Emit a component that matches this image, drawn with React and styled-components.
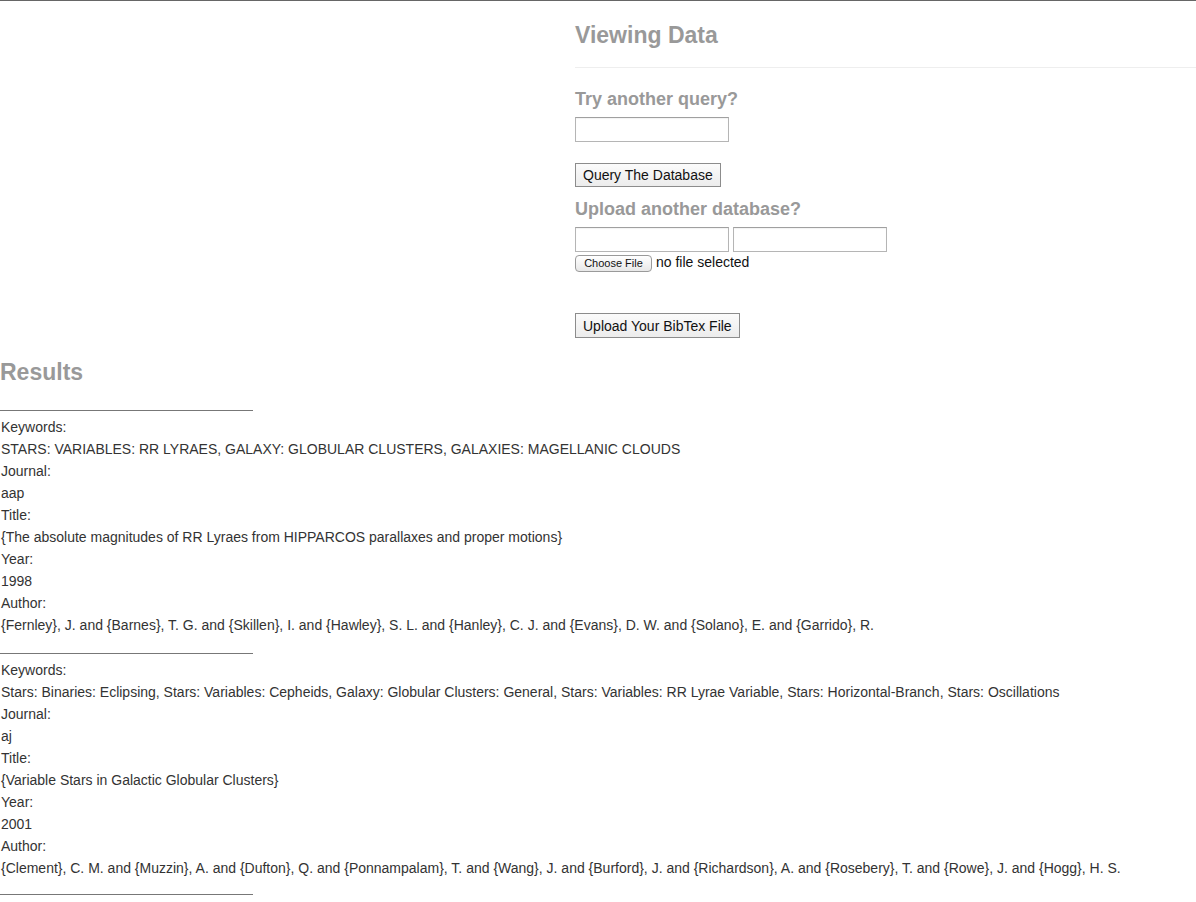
import React from "react";
import styled, { createGlobalStyle } from "styled-components";

const Global = createGlobalStyle`
  html, body { margin: 0; padding: 0; background: #fff; }
  body {
    border-top: 1px solid #666;
    font-family: "Liberation Sans", Arial, Helvetica, sans-serif;
    font-size: 14px;
    line-height: 22px;
    color: #333;
  }
`;

const Page = styled.div`
  display: flex;
  flex-direction: column;
`;

const Top = styled.div`
  display: grid;
  grid-template-columns: 575px 1fr;
`;

const Panel = styled.div`
  display: flex;
  flex-direction: column;
  align-items: flex-start;
`;

const Title = styled.h2`
  margin: ${(p) => p.$mt || 0}px 0 0;
  font-size: 23px;
  line-height: 23px;
  font-weight: bold;
  color: #999;
`;

const Rule = styled.div`
  align-self: stretch;
  height: 1px;
  background: #eee;
  margin-top: 20px;
`;

const SubTitle = styled.h3`
  margin: ${(p) => p.$mt}px 0 0;
  font-size: 18px;
  line-height: 18px;
  font-weight: bold;
  color: #999;
`;

const TextInput = styled.input`
  box-sizing: border-box;
  width: 154px;
  height: 25px;
  margin: 0;
  padding: 2px 4px;
  border: 1px solid #b5b5b5;
  border-top-color: #a0a0a0;
  box-shadow: inset 0 1px 1px rgba(0, 0, 0, 0.05);
  font-family: inherit;
  font-size: 14px;
  background: #fff;
`;

const InputRow = styled.div`
  display: flex;
  gap: 4px;
  margin-top: ${(p) => p.$mt}px;
`;

const Button = styled.button`
  box-sizing: border-box;
  height: ${(p) => p.$h || 24}px;
  margin: ${(p) => p.$mt}px 0 0;
  padding: 0 7px;
  border: 1px solid #8c8c8c;
  border-radius: 0;
  background: linear-gradient(#fbfbfb, #ececec);
  font-family: "Liberation Sans", Arial, sans-serif;
  font-size: 14px;
  color: #111;
  cursor: pointer;
`;

const FileRow = styled.div`
  display: flex;
  align-items: flex-start;
  gap: 4px;
  margin-top: 3px;
  height: 18px;
  line-height: 14px;
`;

const FileButton = styled.button`
  box-sizing: border-box;
  width: 77px;
  height: 17px;
  margin: 0;
  padding: 0;
  border: 1px solid #9a9a9a;
  border-radius: 4px;
  background: linear-gradient(#ffffff, #e8e8e8);
  font-family: "Liberation Sans", Arial, sans-serif;
  font-size: 11px;
  line-height: 15px;
  color: #111;
`;

const FileLabel = styled.span`
  font-size: 14px;
  color: #111;
`;

const Results = styled.section`
  display: flex;
  flex-direction: column;
`;

const Separator = styled.div`
  width: 253px;
  height: 1px;
  background: #777;
  margin: ${(p) => p.$mt}px 0 5px;
`;

const Line = styled.div`
  padding-left: 1px;
  white-space: nowrap;
`;

const records = [
  {
    keywords:
      "STARS: VARIABLES: RR LYRAES, GALAXY: GLOBULAR CLUSTERS, GALAXIES: MAGELLANIC CLOUDS",
    journal: "aap",
    title:
      "{The absolute magnitudes of RR Lyraes from HIPPARCOS parallaxes and proper motions}",
    year: "1998",
    author:
      "{Fernley}, J. and {Barnes}, T. G. and {Skillen}, I. and {Hawley}, S. L. and {Hanley}, C. J. and {Evans}, D. W. and {Solano}, E. and {Garrido}, R.",
  },
  {
    keywords:
      "Stars: Binaries: Eclipsing, Stars: Variables: Cepheids, Galaxy: Globular Clusters: General, Stars: Variables: RR Lyrae Variable, Stars: Horizontal-Branch, Stars: Oscillations",
    journal: "aj",
    title: "{Variable Stars in Galactic Globular Clusters}",
    year: "2001",
    author:
      "{Clement}, C. M. and {Muzzin}, A. and {Dufton}, Q. and {Ponnampalam}, T. and {Wang}, J. and {Burford}, J. and {Richardson}, A. and {Rosebery}, T. and {Rowe}, J. and {Hogg}, H. S.",
  },
];

function Record({ r, first }) {
  return (
    <>
      <Separator $mt={first ? 26 : 17} />
      <Line>Keywords:</Line>
      <Line>{r.keywords}</Line>
      <Line>Journal:</Line>
      <Line>{r.journal}</Line>
      <Line>Title:</Line>
      <Line>{r.title}</Line>
      <Line>Year:</Line>
      <Line>{r.year}</Line>
      <Line>Author:</Line>
      <Line>{r.author}</Line>
    </>
  );
}

export default function App() {
  return (
    <Page>
      <Global />
      <Top>
        <div />
        <Panel>
          <Title $mt={23}>Viewing Data</Title>
          <Rule />
          <SubTitle $mt={22}>Try another query?</SubTitle>
          <InputRow $mt={9}>
            <TextInput type="text" />
          </InputRow>
          <Button $mt={21}>Query The Database</Button>
          <SubTitle $mt={13}>Upload another database?</SubTitle>
          <InputRow $mt={9}>
            <TextInput type="text" />
            <TextInput type="text" />
          </InputRow>
          <FileRow>
            <FileButton type="button">Choose File</FileButton>
            <FileLabel>no file selected</FileLabel>
          </FileRow>
          <Button $mt={40} $h={25}>Upload Your BibTex File</Button>
        </Panel>
      </Top>
      <Results>
        <Title $mt={23}>Results</Title>
        {records.map((r, i) => (
          <Record key={i} r={r} first={i === 0} />
        ))}
        <Separator $mt={15} />
      </Results>
    </Page>
  );
}
